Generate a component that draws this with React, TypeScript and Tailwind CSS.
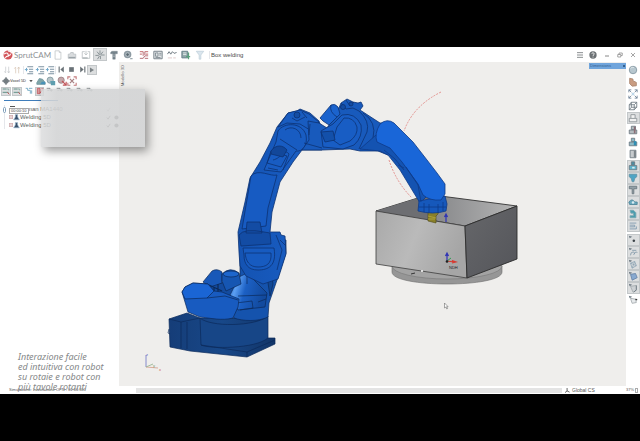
import type { ReactNode } from "react";
import clsx from "clsx";

// Shared wrapper for the small toolbar drawings, all on a 12 x 12 grid
function Glyph({ children, className }: { children: ReactNode; className?: string }) {
  return (
    <svg
      viewBox="0 0 12 12"
      className={clsx("shrink-0", className ?? "size-[10px]")}
      fill="none"
      stroke="#6b7780"
      strokeWidth="1"
      aria-hidden="true"
    >
      {children}
    </svg>
  );
}

interface ToolProps {
  label: string;
  icon: ReactNode;
  active?: boolean;
  className?: string;
}

function Tool({ label, icon, active, className }: ToolProps) {
  return (
    <button
      aria-label={label}
      className={clsx(
        "flex shrink-0 items-center justify-center",
        active && "border border-[#c3c7c9] bg-[#dcdedf]",
        className,
      )}
    >
      {icon}
    </button>
  );
}

function Logo() {
  return (
    <Glyph className="size-[10px]">
      <circle cx="6" cy="6" r="5.4" fill="#d2555a" stroke="none" />
      <path d="M1 5c3-2 5-2 5 0s3 2 3-.5M3 10c0-2 2-3 4-2.500M6 1c2 0 4 1 4.500 3" stroke="#fff" strokeWidth="1.300" />
    </Glyph>
  );
}

const titleTools: { label: string; active?: boolean; icon: ReactNode }[] = [
  {
    label: "New",
    icon: (
      <Glyph>
        <path d="M2.500 1h5l2 2v8h-7zM7.500 1v2h2" stroke="#c4c8ca" />
      </Glyph>
    ),
  },
  {
    label: "Open",
    icon: (
      <Glyph>
        <path d="M1.500 10V5h2l1-2h3v2h3v5z" fill="#d9dcde" stroke="#bcc1c4" />
        <path d="M2 9h8" stroke="#9aa2a7" strokeWidth="1.500" />
      </Glyph>
    ),
  },
  {
    label: "Save",
    icon: (
      <Glyph>
        <path d="M1.500 2h3M8 2h2.500v8h-9V2M6 1v4M4 4l2 2 2-2" stroke="#b9bfc2" />
        <path d="M2 9.500h6" stroke="#8f999e" />
      </Glyph>
    ),
  },
  {
    label: "Machining",
    active: true,
    icon: (
      <Glyph>
        <path d="M6 0.500v5M2.500 2l3 4M9.500 2L7 5.500M0.500 6.500h4M7 6h4.500M5.500 7L3 11M6.500 7v4" stroke="#7b8489" />
      </Glyph>
    ),
  },
  {
    label: "Tool",
    icon: (
      <Glyph>
        <path d="M2 3q1-2 3-1.500h5v3H7.500v6.500h-3V4.500H2z" fill="#75838b" stroke="#75838b" strokeWidth=".5" />
        <path d="M5 6h2M5 8h2" stroke="#c8d0d4" strokeWidth=".8" />
      </Glyph>
    ),
  },
  {
    label: "Simulation",
    icon: (
      <Glyph>
        <circle cx="5.500" cy="5.500" r="4.500" fill="#8d9aa2" stroke="none" />
        <circle cx="5.500" cy="5.500" r="2.200" fill="#5a6972" stroke="#c4cdd2" />
        <path d="M9 9.500h2.500v1.500H8z" fill="#9ba7ad" stroke="none" />
      </Glyph>
    ),
  },
  {
    label: "Calculate",
    icon: (
      <Glyph>
        <path d="M1 2h4M1 5h2.500M7 2h4M8 5h3" stroke="#cf8688" strokeWidth="1.400" />
        <path d="M5 2v5M7 2v4M1 10h4l2-3h4M7 10h4" stroke="#b9727a" strokeWidth="1.200" />
      </Glyph>
    ),
  },
  {
    label: "Report",
    icon: (
      <Glyph>
        <path d="M1 1.500h10v9H1z" fill="#e2e6e8" stroke="#7c878e" strokeWidth="1.200" />
        <path d="M3 3.500h3v4H3zM7.500 4H10M7.500 6H10M3 9h6" stroke="#7c878e" />
      </Glyph>
    ),
  },
  {
    label: "Graph",
    icon: (
      <Glyph>
        <path d="M0.500 5l2-3 2 3 2-3 2 2 3-1" stroke="#737e85" strokeWidth="1.200" />
        <path d="M1 9.500h5M7.500 9.500h3" stroke="#d9c0c0" />
      </Glyph>
    ),
  },
  {
    label: "Postprocessor",
    icon: (
      <Glyph>
        <path d="M1 1.500h7v8H1z" fill="#8ea6a8" stroke="#5f7a82" />
        <path d="M2.500 3.500h4M2.500 5.500h4" stroke="#eef3f3" />
        <path d="M6 8h5M9 3v8" stroke="#5aa27c" strokeWidth="1.500" />
      </Glyph>
    ),
  },
  {
    label: "Filter",
    icon: (
      <Glyph>
        <path d="M1.500 1.500h9L7 6v5H5V6z" fill="#dbe6ee" stroke="#b9cbd7" strokeWidth=".8" />
      </Glyph>
    ),
  },
];

function TitleBar() {
  return (
    <header className="flex h-[15px] items-center bg-white pl-[3px]">
      <Logo />
      <h1 className="ml-px w-[37px] font-[Lato,sans-serif] text-[8px] leading-[10px] text-[#8d9194]">SprutCAM</h1>
      {titleTools.map((t) => (
        <Tool
          key={t.label}
          label={t.label}
          active={t.active}
          icon={t.icon}
          className={clsx("h-[13px] w-[14px]", t.label === "Calculate" && "ml-[2px]")}
        />
      ))}
      <span className="ml-[2px] border-l border-gray-200 pl-px font-['Liberation_Sans',sans-serif] text-[6px] leading-[8px] text-[#4a4a4a]">
        Box welding
      </span>
      <div className="ml-auto flex">
        <Tool
          label="Menu"
          className="h-[13px] w-[13px]"
          icon={
            <Glyph className="size-[8px]">
              <path d="M1.500 2.500h9M1.500 6h9M1.500 9.500h9" strokeWidth="1.500" stroke="#8a8e90" />
            </Glyph>
          }
        />
        <Tool
          label="Help"
          className="h-[13px] w-[14px]"
          icon={
            <Glyph className="size-[8px]">
              <circle cx="6" cy="6" r="5.500" fill="#6c7174" stroke="none" />
              <path d="M4.200 4.500c0-2.500 3.800-2.300 3.600 0C7.700 6 6 5.800 6 7.500M6 8.500v1.300" stroke="#fff" strokeWidth="1.200" />
            </Glyph>
          }
        />
        <Tool
          label="Minimize"
          className="h-[13px] w-[13px]"
          icon={
            <Glyph className="size-[6px]">
              <path d="M2 8h8" strokeWidth="2" stroke="#888" />
            </Glyph>
          }
        />
        <Tool
          label="Restore"
          className="h-[13px] w-[13px]"
          icon={
            <Glyph className="size-[6px]">
              <path d="M1.500 5h6v5h-6zM4 5V2h6.500v5H8" strokeWidth="1.500" stroke="#888" />
            </Glyph>
          }
        />
        <Tool
          label="Close"
          className="h-[13px] w-[14px]"
          icon={
            <Glyph className="size-[6px]">
              <path d="M2 2l8 8M10 2l-8 8" strokeWidth="1.500" stroke="#888" />
            </Glyph>
          }
        />
      </div>
    </header>
  );
}

const listGlyph = (
  <Glyph>
    <path d="M4 2h7M6 5h5M6 8h5M4 10.500h7" stroke="#7d92a3" strokeWidth="1.300" />
    <path d="M1 5.500h3.500M3 3.500v4" stroke="#6fa8cb" strokeWidth="1.200" />
  </Glyph>
);

const millGlyph = (
  <Glyph className="size-[8px]">
    <path d="M1 3h5M1 8h9" stroke="#5c8c83" strokeWidth="1.400" />
    <path d="M6 3h4v2" stroke="#7fa79f" strokeWidth="1.300" />
    <path d="M8 8l3 3" stroke="#c5585b" strokeWidth="1.500" />
  </Glyph>
);

function PlayerRow() {
  return (
    <div className="flex h-[11px] items-center pl-[2px]">
      <Tool
        label="Move down"
        className="w-[10px]"
        icon={
          <Glyph className="size-[8px]">
            <path d="M4 1v9M2 8l2 2.500M8.500 1v9M7 8l1.500 2.500L10 8" stroke="#c3c6c8" />
          </Glyph>
        }
      />
      <Tool
        label="Move up"
        className="w-[10px]"
        icon={
          <Glyph className="size-[8px]">
            <path d="M4 11V2M2 4l2-2.500M8.500 11V2M7 4l1.500-2.500L10 4" stroke="#d3bfae" />
          </Glyph>
        }
      />
      <span className="ml-px h-[8px] w-px bg-gray-200" />
      <Tool label="Expand level" className="w-[10px]" icon={listGlyph} />
      <Tool label="Collapse level" className="w-[11px]" icon={listGlyph} />
      <Tool label="Expand all" className="w-[10px]" icon={listGlyph} />
      <span className="h-[8px] w-px bg-gray-200" />
      <Tool
        label="Previous"
        className="w-[10px]"
        icon={
          <Glyph className="size-[7px]">
            <path d="M2 1v10" stroke="#6a7277" strokeWidth="2" />
            <path d="M10 1v10L4 6z" fill="#6a7277" stroke="none" />
          </Glyph>
        }
      />
      <Tool
        label="Stop"
        className="w-[11px]"
        icon={
          <Glyph className="size-[7px]">
            <path d="M2 2h8v8H2z" fill="#6a7277" stroke="none" />
          </Glyph>
        }
      />
      <Tool
        label="Next"
        className="w-[10px]"
        icon={
          <Glyph className="size-[7px]">
            <path d="M10 1v10" stroke="#6a7277" strokeWidth="2" />
            <path d="M2 1v10l6-5z" fill="#6a7277" stroke="none" />
          </Glyph>
        }
      />
      <Tool
        label="Play"
        active
        className="h-[10px] w-[10px]"
        icon={
          <Glyph className="size-[6px]">
            <path d="M2 1v10l8-5z" fill="#7c8387" stroke="none" />
          </Glyph>
        }
      />
    </div>
  );
}

function VoxelRow() {
  return (
    <div className="flex h-[11px] items-center pl-[2px]">
      <Glyph className="size-[8px]">
        <circle cx="6" cy="6" r="3.500" fill="#8b9297" stroke="#6b7479" strokeWidth="1.500" />
        <path d="M6 0v12M0 6h12" stroke="#6b7479" strokeWidth="1.500" />
      </Glyph>
      <label className="sr-only" htmlFor="model">
        Simulation model
      </label>
      <select
        id="model"
        className="w-[19px] appearance-none font-['Liberation_Sans',sans-serif] text-[4px] leading-[8px] text-[#333]"
        defaultValue="Voxel 5D"
      >
        <option>Voxel 5D</option>
      </select>
      <Glyph className="size-[4px]">
        <path d="M1 3h10L6 10z" fill="#555" stroke="none" />
      </Glyph>
      <Tool
        label="Workpiece"
        className="ml-[2px] w-[11px]"
        icon={
          <Glyph>
            <path d="M1 8l3-5 4 1 3 4v2H1z" fill="#7fa5a8" stroke="#7398a0" />
            <path d="M5 10l2-3h4v3z" fill="#4a92b8" stroke="none" />
          </Glyph>
        }
      />
      <Tool
        label="Compare"
        className="w-[10px]"
        icon={
          <Glyph>
            <circle cx="5" cy="5" r="3.700" fill="#b7c6ca" stroke="#7f989f" />
            <path d="M5 6h6v5H6z" fill="#5f9fb0" stroke="none" />
          </Glyph>
        }
      />
      <Tool
        label="Collisions"
        className="w-[11px]"
        icon={
          <Glyph>
            <circle cx="5" cy="5" r="3.700" fill="#c4a8aa" stroke="#9c8083" />
            <path d="M6 6l5 5M11 7v4H7" stroke="#c4555a" strokeWidth="1.400" />
          </Glyph>
        }
      />
      <Tool
        label="Fit"
        className="w-[10px]"
        icon={
          <Glyph>
            <path d="M1 4V1h3M8 1h3v3M11 8v3H8M4 11H1V8" stroke="#c57a7c" strokeWidth="1.300" />
            <path d="M3.500 3.500l5 5M8.500 3.500l-5 5" stroke="#a78083" strokeWidth="1.500" />
          </Glyph>
        }
      />
    </div>
  );
}

function OperationRow() {
  return (
    <div className="flex h-[10px] items-center gap-px pl-px">
      <Tool label="Feed" active className="h-[9px] w-[10px]" icon={millGlyph} />
      <Tool label="Rapid" active className="h-[9px] w-[10px]" icon={millGlyph} />
      <Tool
        label="Links"
        className="ml-px w-[10px]"
        icon={
          <Glyph className="size-[8px]">
            <path d="M1 2h3v3h4M6 2h5M8 5v5M10 5v5" stroke="#6ba5c1" strokeWidth="1.300" />
          </Glyph>
        }
      />
      <Tool
        label="Stop on error"
        active
        className="h-[9px] w-[9px]"
        icon={
          <Glyph className="size-[8px]">
            <path d="M2 2h4v8H2z" fill="#d89a9c" stroke="#c2474d" />
            <path d="M6 9l4-5M8 3h3" stroke="#c2474d" strokeWidth="1.400" />
          </Glyph>
        }
      />
      {["Lead in", "Lead out", "Approach", "Retract", "Plane"].map((label) => (
        <Tool
          key={label}
          label={label}
          className="w-[9px]"
          icon={
            <Glyph className="size-[8px]">
              <path d="M1 2h5v3h4M8 3v4M2 5h3" stroke="#7e8488" strokeWidth="1.200" />
            </Glyph>
          }
        />
      ))}
    </div>
  );
}

function TreeMarks({ dim }: { dim?: boolean }) {
  return (
    <span className="flex gap-[3px]">
      <Glyph className="size-[5px]">
        <path d="M2 6l3 4 5-8" stroke={dim ? "#bbb" : "#444"} strokeWidth="2" />
      </Glyph>
      {!dim && (
        <Glyph className="size-[5px]">
          <circle cx="6" cy="6" r="5" fill="#444" stroke="none" />
        </Glyph>
      )}
    </span>
  );
}

function OperationTree() {
  return (
    <div className="relative mt-[4px] ml-[4px] border-l border-gray-200">
      <ul className="font-['Liberation_Sans',sans-serif] text-[6px] leading-[8px] text-[#5b5f62]">
        <li className="flex h-[8px] items-center pl-[22px]">
          <span className="w-[79px]">man MA1440</span>
          <TreeMarks dim />
        </li>
        {["Welding 5D", "Welding 5D"].map((name, i) => (
          <li key={i} className="flex h-[8px] items-center pl-[4px]">
            <Glyph className="size-[4px]">
              <path d="M1 1h10v10H1zM3 6h6" stroke="#a05a5e" strokeWidth="1.500" />
            </Glyph>
            <Glyph className="size-[7px]">
              <path d="M4 1h4v4l3 5H1l3-5z" fill="#39516a" stroke="#a9c2da" />
            </Glyph>
            <span className="w-[86px]">{name}</span>
            <TreeMarks />
          </li>
        ))}
      </ul>
      <div className="absolute top-[3px] left-[4px] h-[6px] border border-[#aaa] bg-white px-px font-['Liberation_Sans',sans-serif] text-[4px] leading-[4px] text-[#444]">
        00:00:10
      </div>
      <span className="absolute top-px left-[5px] h-px w-[5px] bg-[#555]" />
      <span className="absolute top-[2px] left-[-2px] h-[6px] w-[3px] rounded-full border border-[#7f9fbb] bg-white" />
    </div>
  );
}

function LeftPanel() {
  return (
    <aside className="relative flex w-[119px] shrink-0 flex-col bg-white pt-[2px]">
      <PlayerRow />
      <VoxelRow />
      <OperationRow />
      <div className="mt-[4px] ml-[4px] h-px w-[54px] bg-[#3f7dbb]" />
      <OperationTree />
      <p className="mt-auto mb-[-6px] ml-[18px] font-['Noto_Sans',sans-serif] text-[9px] leading-[10px] whitespace-nowrap text-[#858788] italic">
        Interazione facile
        <br />
        ed intuitiva con robot
        <br />
        su rotaie e robot con
        <br />
        più tavole rotanti
      </p>
      {/* Translucent panel being dragged over the tree */}
      <div className="absolute top-[27px] left-[41px] z-10 h-[58px] w-[104px] bg-linear-to-r from-[#d9dadb]/80 to-[#d3d4d5]/90 to-15% shadow-[3px_4px_9px_rgba(0,0,0,0.4)]" />
    </aside>
  );
}

function RobotScene() {
  return (
    <svg viewBox="119 62 507 324" className="block h-full w-full" role="img" aria-label="Welding robot and box">
      <defs>
        <linearGradient id="front" x1="0" y1="0" x2="1" y2="0.300">
          <stop offset="0" stopColor="#a9a9a9" />
          <stop offset="0.500" stopColor="#bababa" />
          <stop offset="1" stopColor="#a6a6a6" />
        </linearGradient>
        <linearGradient id="side" x1="0" y1="0" x2="1" y2="1">
          <stop offset="0" stopColor="#66676a" />
          <stop offset="1" stopColor="#54555a" />
        </linearGradient>
        <linearGradient id="inside" x1="0" y1="0" x2="1" y2="0">
          <stop offset="0" stopColor="#77787b" />
          <stop offset="0.450" stopColor="#8a8b8d" />
          <stop offset="1" stopColor="#b5b5b5" />
        </linearGradient>
        <linearGradient id="base" x1="0" y1="0" x2="1" y2="0">
          <stop offset="0" stopColor="#153d78" />
          <stop offset="0.500" stopColor="#184889" />
          <stop offset="1" stopColor="#123568" />
        </linearGradient>
        <linearGradient id="cone" x1="0" y1="0" x2="1" y2="0.300">
          <stop offset="0" stopColor="#1557b4" />
          <stop offset="0.250" stopColor="#5c9ff2" />
          <stop offset="0.500" stopColor="#1c60c4" />
          <stop offset="1" stopColor="#124a9e" />
        </linearGradient>
        <linearGradient id="arm" x1="0" y1="0" x2="1" y2="0">
          <stop offset="0" stopColor="#1453b2" />
          <stop offset="1" stopColor="#1a60c8" />
        </linearGradient>
      </defs>

      {/* Turntable and box */}
      <path d="M392 266v6c0 16 110 16 110 0v-6z" fill="#969696" stroke="#6b6b6b" strokeWidth=".6" />
      <ellipse cx="447" cy="266" rx="55" ry="13" fill="#a3a3a3" stroke="#777" strokeWidth=".6" />
      <path d="M376 211L429 194.500 517 206 465 226z" fill="url(#inside)" stroke="#333" strokeWidth=".9" />
      <path d="M376 211L429 194.500V220z" fill="#6d6e72" />
      <path d="M376 211L465 226 467 278 376 264z" fill="url(#front)" stroke="#3c3c3c" strokeWidth=".8" />
      <path d="M465 226L517 206V259L467 278z" fill="url(#side)" stroke="#2d2d2d" strokeWidth=".9" />

      {/* Tool path arc */}
      <path d="M441 92Q413 106 404 131M389 160Q396 182 412 198" fill="none" stroke="#e07c78" strokeWidth=".8" strokeDasharray="2 1.200" />

      {/* Pedestal */}
      <g stroke="#0c2a5a" strokeWidth=".7" strokeLinejoin="round">
        <path d="M169 319L187 313 200 318H265V338H275V344L247 357 190 351 170 347z" fill="url(#base)" />
        <path d="M200 318C210 327 255 327 268 316V338C255 349 210 349 201 345z" fill="#174687" />
        <path d="M169 319L181 322V348M181 322L200 318M187 322V349M201 345L247 352 275 340M247 352V357M169 329l-1 4 2 1" fill="none" />
        <path d="M222 293L240 277 240 240H286V253L277 280 269 303 268 317C258 322 242 321 234 318z" fill="#1553ad" />
        <path d="M206 285L241 280V300H206z" fill="#134b9f" />
        <path d="M230 295L239 277 247 273 267 293 265 307 238 310z" fill="url(#cone)" />
        <path d="M238 296L267 295M236 303L252 301 253 308 240 310M247 273V284M258 302L266 299" fill="none" />
        <path d="M203 282L212 271Q217 268 222 272V283L210 287z" fill="#1858b8" />
        <path d="M222 281V274Q230 266 239 273L241 284 226 291z" fill="#1656b2" />
        <ellipse cx="231" cy="274" rx="8" ry="3" fill="#1d66cd" />
        <path d="M214 287V299M218 284V298M209 285L222 291" fill="none" strokeWidth="1.200" />
        <path d="M182 292L185 287 193 283 208 284 214 291 222 292 239 299 238 307 233 318C222 321 210 318 200 317L188 312z" fill="#185bc0" />
        <path d="M182 292L185 287 193 283 208 284 214 291 207 298 185 299z" fill="#1a65d4" />
        <path d="M207 298L225 296 238 300" fill="none" />
        <path d="M268 283l4-7 1 8-3 12z" fill="#124894" />
      </g>

      {/* Lower arm */}
      <g stroke="#0d3273" strokeWidth=".8" strokeLinejoin="round">
        <path d="M239 252L238 232 245 202 250 178 260 162 270 143 277 127 288 113 297 111 300 109 310 113 319 121 322 130 322 150H302L293 162 280 182 272 212 270 232H280L281 235 285 236 286 254 278 279 263 284 246 276 240 266z" fill="url(#arm)" />
        <path d="M251 176C258 168 271 177 277 175L268 208 266 226 242 229z" fill="#175bc2" />
        <path d="M278 131C284 122 302 122 306 135C308 146 302 152 296 151L281 172 264 170 276 142z" fill="#185cc2" />
        <path d="M280 139L297 150M273 160C282 158 284 148 289 154L283 170M268 168L278 170M271 151L287 156 281 167 267 163z" fill="none" />
        <path d="M271 151C276 144 283 145 287 150L283 157 271 154z" fill="#12479a" />
        <path d="M239 235Q244 228 264 232L270 233 271 244 241 246zM247 222H260L262 233H246z" fill="#134ca4" />
        <path d="M243 248H274C277 266 268 270 258 270C248 270 244 264 244 255z" fill="#175bc0" />
        <path d="M245 253H271C272 264 266 267 258 267C249 267 246 261 245 253M276 235L282 250 277 270M280 240L286 246" fill="none" />
        <path d="M285 130C291 125 301 129 301 138M289 113L291 118 305 116 312 122" fill="none" />
        <path d="M278 127L288 113 300 110 309 114 319 122 310 130 300 124 287 123z" fill="#195cc0" />
        <circle cx="297" cy="115" r="3" fill="#144da3" />
        <path d="M292 118l5 3 8-4M302 112l5 6" fill="none" />
      </g>

      {/* Elbow */}
      <g stroke="#0d3273" strokeWidth=".8" strokeLinejoin="round">
        <path d="M308 121L319 123 327 128 336 115 341 103 347 99 353 102 358 103 361 102 363 106 360 110 380 123 393 123 388 155 378 151 360 151 350 149 322 150H302L309 140z" fill="#185abc" />
        <path d="M320 118L331 105Q335 103 338 107L340 114 329 125 323 121z" fill="#1b63cd" />
        <path d="M331 105Q329 112 337 117M341 103L346 109 353 108 359 111M346 100L350 106 354 102" fill="none" />
        <path d="M333 124L342 115Q355 112 361 125Q363 137 354 145L343 149 323 147 321 131z" fill="#185dc4" />
        <path d="M337 127L344 118Q354 117 357 127Q358 135 350 141L340 145 333 140z" fill="none" />
        <path d="M321 132L333 131 335 140 325 142z" fill="#1350aa" />
        <path d="M359 111Q370 121 367 132L359 149M363 113Q377 122 373 138L363 149M367 150L382 130M304 143L322 148M310 124L309 135" fill="none" />
        <circle cx="343" cy="107" r="2.500" fill="#134ca3" />
        <circle cx="351" cy="104" r="2" fill="#134ca3" />
      </g>

      {/* Forearm and wrist */}
      <path d="M428 208h11l-1 6-2 2v7l-8-2v-5z" fill="#8a8028" stroke="#4d4816" strokeWidth=".6" />
      <path d="M428 216l8 2M428 219h7" stroke="#b5a83c" strokeWidth=".8" />
      <g stroke="#0e3a88" strokeWidth=".8" strokeLinejoin="round">
        <path d="M360 149L376 135 394 145 411 168 428 195 420 203 400 170 388 155 380 151z" fill="#1453b1" />
        <path d="M419 201L445 196 447 204 446 211Q433 215 418 211z" fill="#1658bb" />
        <path d="M380 124Q387 118 394 123L413 142 427 160 437 173 445 184V194L441 200Q430 201 423 195L418 184 402 162 390 148 377 142Q374 134 380 124z" fill="#1966d8" />
        <path d="M384 150Q396 158 404 170M406 167L418 185 421 202M424 203V212M429 204V213M438 204V213M443 202V211M419 207H446M398 165l6 3" fill="none" />
      </g>

      {/* Coordinate systems */}
      <path d="M446 222v-7m-1.500 2l1.500-3 1.500 3M447 261v-7m-1.500 2l1.500-3 1.500 3" stroke="#3034b4" fill="none" strokeWidth="1.200" />
      <path d="M447 261l7 1m-2-1.500l4 1.500-4 1" stroke="#d63a31" fill="none" strokeWidth="1.200" />
      <path d="M447 261l4-3" stroke="#2c9b4f" strokeWidth="1" />
      <circle cx="447" cy="261.500" r="1.300" fill="#222" />
      <text x="449" y="269" fontSize="4" fontFamily="Liberation Sans, sans-serif" fill="#222">
        NDH
      </text>
      <circle cx="422" cy="271" r="1" fill="#fff" />
      <path d="M411 274l4-1" stroke="#333" />
      <path d="M444.500 303v5l1.300-1 1 2 .8-.5-1-1.800h1.500z" fill="#fff" stroke="#555" strokeWidth=".5" />
      <path d="M146 367v-12" stroke="#6a71c7" strokeWidth=".8" />
      <path d="M146 367l12 1" stroke="#d49b86" strokeWidth=".8" />
      <path d="M146 367l7-3" stroke="#8fb08a" strokeWidth=".8" />
      <g fontSize="4" fontFamily="Liberation Sans, sans-serif">
        <text x="146" y="356" fill="#5a62c0">z</text>
        <text x="153" y="367" fill="#779a72">y</text>
        <text x="159" y="371" fill="#cf5b50">x</text>
      </g>
    </svg>
  );
}

function Viewport() {
  return (
    <main className="relative min-w-0 flex-1 bg-[#efeeec]">
      <RobotScene />
      <div className="absolute top-[3px] left-px rotate-180 font-['Open_Sans',sans-serif] text-[4px] leading-[6px] text-[#555] [writing-mode:vertical-rl]">
        Modello 3D
      </div>
      <label className="sr-only" htmlFor="view">
        View
      </label>
      <select
        id="view"
        defaultValue="Dimensions"
        className="absolute top-px right-0 h-[6px] w-[37px] appearance-none bg-[#70a5dc] pl-px font-['Liberation_Sans',sans-serif] text-[4px] leading-[6px] text-[#35618f]"
      >
        <option>Dimensions</option>
      </select>
      <span className="pointer-events-none absolute top-[3px] right-px size-[2px] bg-[#35618f]" />
    </main>
  );
}

const pickMark = <path d="M1 1l4 1-3 2z" fill="#6b7780" stroke="none" />;

const viewTools: { label: string; active?: boolean; icon: ReactNode }[] = [
  {
    label: "Shaded",
    icon: (
      <>
        <circle cx="6" cy="6" r="4.500" fill="#b7c7cf" stroke="#8295a0" />
        <path d="M3 4q2-2 4-1" stroke="#e8eef1" />
      </>
    ),
  },
  {
    label: "Section",
    icon: <path d="M2 1.500l4 1v2l4 2v4l-5 .5-3-3z" fill="#c99c82" stroke="#a98570" />,
  },
  {
    label: "Zoom to fit",
    icon: (
      <>
        <path d="M1 4V1h3M8 1h3v3M11 8v3H8M4 11H1V8M1 1l3 3M11 1L8 4M11 11L8 8M1 11l3-3" stroke="#6c8196" />
        <path d="M4.500 4.500h3v3h-3z" fill="#bcd6e8" stroke="none" />
      </>
    ),
  },
  {
    label: "Isometric",
    icon: <path d="M1.500 4.500h6v6h-6zM4 1.500h6.500v6H4zM1.500 4.500L4 1.500M7.500 4.500l3-3M7.500 10.500l3-3M1.500 10.500l2.500-3" />,
  },
  {
    label: "Part",
    active: true,
    icon: <path d="M1.500 6.500h9v4h-9zM3.500 6V2h5v4" fill="#f1f1f1" stroke="#8a9095" />,
  },
  {
    label: "Machine",
    icon: (
      <>
        <path d="M4 1.500h5v4H4zM1.500 6h9v4.500h-9z" fill="#b4bcc0" />
        <path d="M7 2h2v8H7z" fill="#8b6d75" stroke="none" />
      </>
    ),
  },
  {
    label: "Fixture",
    icon: (
      <>
        <path d="M4 1.500h4v4H4zM1.500 6h9v4.500h-9z" fill="#8fb9c6" />
        <path d="M7 5h3v5H7z" fill="#2e8eb4" stroke="none" />
      </>
    ),
  },
  {
    label: "Stock",
    icon: (
      <>
        <path d="M2.500 1.500h7v9h-7z" fill="#c6cbce" />
        <path d="M7 2h2.500v8H7z" fill="#7d868b" stroke="none" />
      </>
    ),
  },
  {
    label: "Result",
    active: true,
    icon: (
      <>
        <path d="M4 1h4v4H4z" fill="#4c8fa3" />
        <path d="M1.500 5.500h9v5h-9z" fill="#5fb3cc" />
        <path d="M5 7h3v2H5z" fill="#dceef4" stroke="none" />
      </>
    ),
  },
  {
    label: "Holder",
    active: true,
    icon: <path d="M1.500 1.500h9v3L8 6.500 7 10.500H5L4 6.500 1.500 4.500z" fill="#4ea4c4" stroke="#5f93a6" />,
  },
  {
    label: "Cutter",
    active: true,
    icon: <path d="M1.500 1.500h9v3H7v6H5v-6H1.500z" fill="#93a0a7" stroke="#69767d" />,
  },
  {
    label: "Spindle",
    active: true,
    icon: (
      <>
        <path d="M1 6q4-5 7 0h3v3H2z" fill="#69a8bd" stroke="#4b8398" />
        <circle cx="6" cy="6.500" r="1.500" fill="#d9ecf2" stroke="none" />
      </>
    ),
  },
  {
    label: "Robot",
    active: true,
    icon: (
      <>
        <path d="M2.500 1.500h4l3 3v6h-7V8h4V5h-3z" fill="#4b9dae" stroke="#7ba7b1" />
      </>
    ),
  },
  {
    label: "Operations list",
    active: true,
    icon: <path d="M2 2.500h8M2 5h6v2H2M2 9.500h8v-3" stroke="#7895ac" />,
  },
  {
    label: "Pick point",
    active: true,
    icon: (
      <>
        {pickMark}
        <circle cx="7" cy="7" r="1.500" fill="#3b4247" stroke="none" />
      </>
    ),
  },
  {
    label: "Pick curve",
    active: true,
    icon: (
      <>
        {pickMark}
        <path d="M3 10q0-4 3-4t1 3q3-5 4-2M5 4h5" stroke="#8299a9" />
      </>
    ),
  },
  {
    label: "Pick edge",
    active: true,
    icon: (
      <>
        {pickMark}
        <path d="M3 5l5-2 2 5-5 3zM3 5l7 3M8 3L5 11" stroke="#8fa5b5" />
      </>
    ),
  },
  {
    label: "Pick face",
    active: true,
    icon: (
      <>
        {pickMark}
        <path d="M3 4l6-1 2 5-6 3z" fill="#88a9d0" stroke="#6682a6" />
      </>
    ),
  },
  {
    label: "Pick body",
    active: true,
    icon: (
      <>
        {pickMark}
        <path d="M3 4l7-1v6l-4 2z" fill="#cdd1d4" stroke="#a2a8ac" />
        <path d="M10 3v5l-3 3" stroke="#6b7780" />
      </>
    ),
  },
  {
    label: "Pick mesh",
    icon: (
      <>
        {pickMark}
        <path d="M3 4l6 1 1 4-5 1z" fill="#e7eaec" stroke="#a2a8ac" />
        <path d="M9 5l2 1" stroke="#333" strokeWidth="1.500" />
      </>
    ),
  },
];

function ViewToolbar() {
  return (
    <nav aria-label="View tools" className="flex w-[14px] shrink-0 flex-col items-center bg-white pt-[2px]">
      {viewTools.map((t) => (
        <Tool
          key={t.label}
          label={t.label}
          active={t.active}
          className={clsx("h-[12px] w-[13px]", t.label === "Pick point" && "mt-[2px]")}
          icon={<Glyph>{t.icon}</Glyph>}
        />
      ))}
    </nav>
  );
}

function StatusBar() {
  return (
    <footer className="flex h-[8px] items-center bg-white font-['Liberation_Sans',sans-serif] text-[5px] leading-[6px] text-[#555]">
      <span className="w-[136px] pl-[9px] text-[4px] whitespace-nowrap">Simulazione: Lavorazione OPN - 01:06:301</span>
      <span className="h-[5px] flex-1 bg-[#e4e4e4]" />
      <span className="flex w-[64px] items-center gap-[2px] pl-[3px]">
        <Glyph className="size-[5px]">
          <path d="M5 0v7L0 11M5 7l6 3" stroke="#333" strokeWidth="1.800" />
        </Glyph>
        Global CS
      </span>
      <span className="flex w-[14px] items-center gap-px text-[4px]">
        37%
        <span className="h-[5px] w-[3px] border border-[#aaa]" />
      </span>
    </footer>
  );
}

export default function App() {
  return (
    <div className="flex min-h-screen flex-col bg-black py-[47px]">
      <TitleBar />
      <div className="flex flex-1">
        <LeftPanel />
        <Viewport />
        <ViewToolbar />
      </div>
      <StatusBar />
    </div>
  );
}
